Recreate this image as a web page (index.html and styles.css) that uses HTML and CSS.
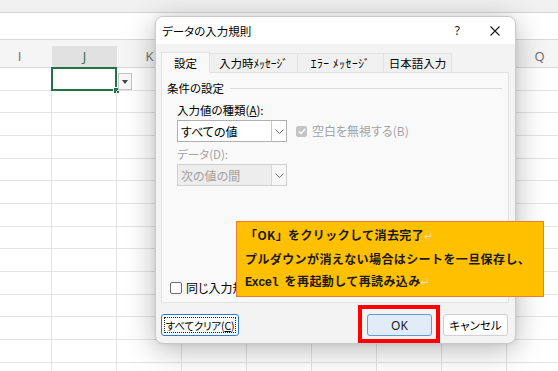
FILE: index.html
```html
<!DOCTYPE html>
<html lang="ja">
<head>
<meta charset="utf-8">
<title>データの入力規則</title>
<link rel="stylesheet" href="styles.css">
</head>
<body>
<div class="sheet">
  <div class="ribbon"></div>
  <div class="fbar"></div>
  <div class="hdr">
    <div class="hc">I</div><div class="hc hc-sel">J</div><div class="hc">K</div><div class="hc">L</div><div class="hc">M</div><div class="hc">N</div><div class="hc">O</div><div class="hc">P</div><div class="hc">Q</div>
  </div>
  <div class="row"><i></i><i class="cell-sel"><span class="sel"><span class="handle"></span></span></i><i class="cell-dd"><span class="ddbtn"><span class="tri"></span></span></i><i></i><i></i><i></i><i></i><i></i><i></i></div>
  <div class="row"><i></i><i></i><i></i><i></i><i></i><i></i><i></i><i></i><i></i></div>
  <div class="row"><i></i><i></i><i></i><i></i><i></i><i></i><i></i><i></i><i></i></div>
  <div class="row"><i></i><i></i><i></i><i></i><i></i><i></i><i></i><i></i><i></i></div>
  <div class="row"><i></i><i></i><i></i><i></i><i></i><i></i><i></i><i></i><i></i></div>
  <div class="row"><i></i><i></i><i></i><i></i><i></i><i></i><i></i><i></i><i></i></div>
  <div class="row"><i></i><i></i><i></i><i></i><i></i><i></i><i></i><i></i><i></i></div>
  <div class="row"><i></i><i></i><i></i><i></i><i></i><i></i><i></i><i></i><i></i></div>
  <div class="row"><i></i><i></i><i></i><i></i><i></i><i></i><i></i><i></i><i></i></div>
  <div class="row"><i></i><i></i><i></i><i></i><i></i><i></i><i></i><i></i><i></i></div>
  <div class="row"><i></i><i></i><i></i><i></i><i></i><i></i><i></i><i></i><i></i></div>
  <div class="row"><i></i><i></i><i></i><i></i><i></i><i></i><i></i><i></i><i></i></div>
  <div class="row"><i></i><i></i><i></i><i></i><i></i><i></i><i></i><i></i><i></i></div>
  <div class="row"><i></i><i></i><i></i><i></i><i></i><i></i><i></i><i></i><i></i></div>
</div>

<div class="dlg">
  <div class="titlebar">
    <span class="title">データの入力規則</span>
    <span class="help">?</span>
    <svg class="close" width="10" height="10" viewBox="0 0 10 10"><path d="M0.5 0.5 L9.5 9.5 M9.5 0.5 L0.5 9.5" stroke="#1a1a1a" stroke-width="1.1" fill="none"/></svg>
  </div>
  <div class="dbody">
    <div class="tabs">
      <div class="tab tab-on t1">設定</div>
      <div class="tab t2">入力時ﾒｯｾｰｼﾞ</div>
      <div class="tab t3">ｴﾗｰ ﾒｯｾｰｼﾞ</div>
      <div class="tab t4">日本語入力</div>
    </div>
    <div class="panel">
      <div class="group"><span>条件の設定</span><span class="gline"></span></div>
      <div class="inner">
        <div class="lbl">入力値の種類(<u>A</u>):</div>
        <div class="selrow">
          <div class="combo"><span class="ctext">すべての値</span><span class="carrow"><svg width="9" height="5" viewBox="0 0 9 5"><path d="M0.5 0.5 L4.5 4.5 L8.5 0.5" stroke="#606060" fill="none" stroke-width="1"/></svg></span></div>
          <div class="chk chk-dis"><span class="box box-on"><svg width="8" height="7" viewBox="0 0 8 7"><path d="M0.8 3.5 L3 5.6 L7.2 1" stroke="#fff" stroke-width="1.4" fill="none"/></svg></span><span>空白を無視する(B)</span></div>
        </div>
        <div class="lbl lbl-dis">データ(D):</div>
        <div class="combo combo-dis"><span class="ctext">次の値の間</span><span class="carrow"><svg width="9" height="5" viewBox="0 0 9 5"><path d="M0.5 0.5 L4.5 4.5 L8.5 0.5" stroke="#7a7a7a" fill="none" stroke-width="1"/></svg></span></div>
      </div>
      <div class="chk chk-bottom"><span class="box"></span><span class="clip">同じ入力規則が設定されたすべてのセルに変更を適用する(P)</span></div>
    </div>
    <div class="btns">
      <div class="btn btn-focus"><span class="focusrect">すべてクリア(<u>C</u>)</span></div>
      <div class="btn btn-ok">OK</div>
      <div class="btn btn-cancel">キャンセル</div>
    </div>
  </div>
</div>

<div class="callout">
  <div class="cl">「OK」をクリックして消去完了<span class="ret">↵</span></div>
  <div class="cl">プルダウンが消えない場合はシートを一旦保存し、</div>
  <div class="cl"><span class="lat">Excel </span>を再起動して再読み込み<span class="ret">↵</span></div>
</div>

<div class="redbox"></div>
</body>
</html>
```

FILE: styles.css
```css
* { box-sizing: border-box; }
html, body { margin: 0; padding: 0; }
body {
  width: 558px;
  height: 371px;
  overflow: hidden;
  position: relative;
  background: #fff;
  font-family: "Noto Sans CJK JP", "Noto Sans", sans-serif;
}

/* spreadsheet */
.sheet { width: 558px; overflow: hidden; }
.ribbon { height: 13px; background: #f0f0f0; border-bottom: 1px solid #d4d4d4; }
.fbar { height: 27px; background: #fff; border-bottom: 1px solid #dadada; }
.hdr {
  display: flex;
  margin-left: -13px;
  height: 28px;
  background: #f5f5f5;
  border-bottom: 1px solid #d6d6d6;
}
.hc {
  width: 65px;
  flex: none;
  display: flex;
  align-items: center;
  justify-content: center;
  padding-top: 4px;
  font: 13px "Open Sans", "Noto Sans", sans-serif;
  color: #6a6a6a;
}
.hc-sel {
  background: linear-gradient(to bottom, transparent 6px, #e1e1e1 6px);
  color: #2f6b3f;
}
.row { display: flex; margin-left: -13px; height: 22.67px; }
.row i {
  width: 65px;
  flex: none;
  border-right: 1px solid #e3e3e3;
  border-bottom: 1px solid #e3e3e3;
  position: relative;
}
.sel {
  position: absolute;
  left: -1px; top: -1px; right: -1px; bottom: -1px;
  border: 2px solid #217346;
}
.handle {
  position: absolute;
  right: -4px;
  bottom: -4px;
  width: 6px;
  height: 6px;
  background: #217346;
  border: 1px solid #fff;
  border-width: 1px 0 0 1px;
}
.ddbtn {
  position: absolute;
  left: 1px;
  top: 5px;
  width: 14px;
  height: 17px;
  background: #f7f7f7;
  border: 1px solid #c4c4c4;
  display: flex;
  align-items: center;
  justify-content: center;
}
.tri {
  width: 0; height: 0;
  border-left: 3.5px solid transparent;
  border-right: 3.5px solid transparent;
  border-top: 4px solid #444;
}

/* dialog */
.dlg {
  position: absolute;
  left: 155px;
  top: 16px;
  width: 361px;
  height: 328px;
  border: 1px solid #c9c9c9;
  border-radius: 8px;
  background: #f3f3f3;
  box-shadow: 0 6px 30px rgba(0,0,0,0.28), 0 0 4px rgba(0,0,0,0.08);
  display: flex;
  flex-direction: column;
  overflow: hidden;
  font-size: 11.5px;
  font-feature-settings: "palt";
  color: #000;
}
.titlebar {
  height: 27px;
  background: #fff;
  display: flex;
  align-items: center;
  padding: 0 15px 0 6px;
  flex: none;
}
.title { font-size: 11.5px; }
.help { margin-left: auto; margin-right: 30px; font: 12px "Noto Sans", sans-serif; color: #1a1a1a; }
.close { display: block; }
.dbody {
  flex: 1;
  padding: 8px 6px 7px 5px;
  display: flex;
  flex-direction: column;
}
.tabs {
  display: flex;
  align-items: flex-end;
  height: 20px;
  flex: none;
  position: relative;
  z-index: 1;
}
.tab {
  height: 19px;
  background: #f0f0f0;
  border: 1px solid #e2e2e2;
  border-bottom: none;
  display: flex;
  align-items: center;
  justify-content: center;
  font-size: 11.5px;
  white-space: nowrap;
  font-feature-settings: normal;
}
.tab + .tab { border-left: none; }
.tab-on { height: 21px; margin-bottom: -1px; background: #f9f9f9; }
.t1 { width: 49px; }
.t2 { width: 88px; }
.t3 { width: 86px; letter-spacing: 0.6px; }
.t4 { width: 68px; font-feature-settings: "palt"; }
.panel {
  height: 231px;
  flex: none;
  background: #f9f9f9;
  border: 1px solid #e2e2e2;
  padding: 7px 6px 6px 5px;
  display: flex;
  flex-direction: column;
}
.group { display: flex; align-items: center; line-height: 16px; }
.gline { flex: 1; height: 1px; background: #dcdcdc; margin-left: 6px; margin-top: 1px; }
.inner { padding-left: 10px; }
.lbl { line-height: 16px; margin-top: 6px; }
.lbl-dis { color: #a3a3a3; margin-top: 4px; }
.selrow { display: flex; align-items: center; margin-top: 2px; }
.combo {
  width: 110px;
  height: 22px;
  border: 1px solid #b0b0b0;
  background: #fff;
  display: flex;
  align-items: center;
  flex: none;
}
.combo-dis { margin-top: 2px; background: #ededed; border-color: #cfcfcf; color: #a0a0a0; }
.ctext { flex: 1; padding-left: 3px; font-size: 12px; }
.carrow {
  width: 15px;
  height: 100%;
  border-left: 1px solid #c8c8c8;
  background: #fff;
  display: flex;
  align-items: center;
  justify-content: center;
}
.combo-dis .carrow { background: #f7f7f7; border-left-color: #d8d8d8; }
.chk { display: flex; align-items: center; line-height: 16px; white-space: nowrap; }
.chk-dis { margin-left: 9px; color: #a3a3a3; font-size: 12px; }
.box {
  width: 12px;
  height: 12px;
  border: 1px solid #6e6e6e;
  border-radius: 2px;
  background: #fff;
  margin-right: 4px;
  flex: none;
  display: flex;
  align-items: center;
  justify-content: center;
}
.box-on { background: #c4c4c4; border-color: #c4c4c4; width: 11px; height: 11px; margin-right: 5px; }
.chk-bottom { margin-top: auto; padding-left: 3px; font-size: 12px; }
.clip { width: 52px; overflow: hidden; }

.btns { display: flex; margin-top: 11px; height: 22px; flex: none; }
.btn {
  height: 22px;
  width: 65px;
  border: 1px solid #d0d0d0;
  border-radius: 3px;
  background: #fdfdfd;
  display: flex;
  align-items: center;
  justify-content: center;
  font-size: 11.5px;
}
.btn-focus { width: 78px; border-color: #2a7bd4; padding: 2px; font-size: 10.5px; }
.focusrect {
  flex: 1;
  align-self: stretch;
  border: 1px dotted #222;
  display: flex;
  align-items: center;
  justify-content: center;
  white-space: nowrap;
  letter-spacing: -0.2px;
}
.btn-ok { margin-left: auto; background: #e0ecf8; border-color: #5f9bd8; font: 12px "Noto Sans", sans-serif; color: #1a1a1a; }
.btn-cancel { margin-left: 11px; margin-right: 1px; }

/* callout */
.callout {
  position: absolute;
  left: 236px;
  top: 221px;
  width: 308px;
  height: 76px;
  background: #ffc000;
  border: 1px solid #ed7d31;
  padding: 2px 0 0 8px;
  font-size: 12px;
  font-weight: 700;
  letter-spacing: 0.4px;
  color: #1a1a1a;
}
.cl { line-height: 22px; white-space: nowrap; }
.lat { font: 700 12px "Liberation Mono", monospace; letter-spacing: -0.6px; }
.ret { color: #e6dcc0; font-weight: 400; font-family: "DejaVu Sans", sans-serif; font-size: 11px; }

.redbox {
  position: absolute;
  left: 358px;
  top: 305px;
  width: 82px;
  height: 38px;
  border: 4px solid #ff0000;
}
```
